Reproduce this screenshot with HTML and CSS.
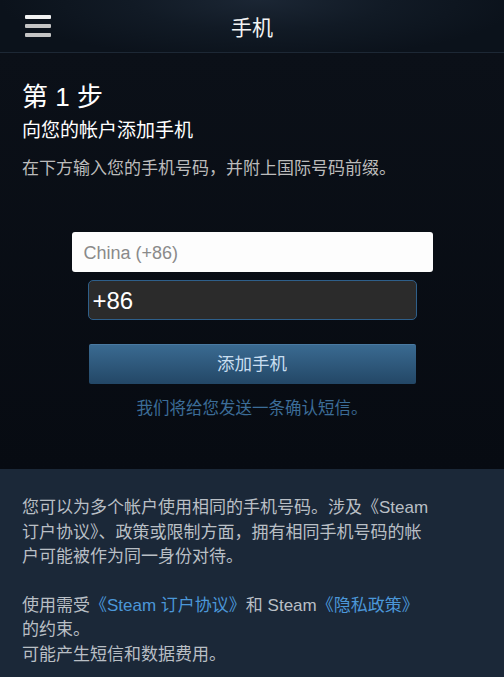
FILE: index.html
```html
<!DOCTYPE html>
<html lang="zh-CN">
<head>
<meta charset="utf-8">
<title>手机</title>
<link rel="stylesheet" href="styles.css">
</head>
<body>
<header class="topbar">
  <div class="menu" aria-label="菜单">
    <span class="bar bar-top"></span>
    <span class="bar"></span>
    <span class="bar"></span>
  </div>
  <h1 class="title">手机</h1>
</header>
<main class="step">
  <h2 class="step-num">第 1 步</h2>
  <h3 class="step-title">向您的帐户添加手机</h3>
  <p class="step-desc">在下方输入您的手机号码，并附上国际号码前缀。</p>
  <div class="form">
    <div class="select">China (+86)</div>
    <div class="phone">+86</div>
    <div class="button">添加手机</div>
    <p class="confirm">我们将给您发送一条确认短信。</p>
  </div>
</main>
<section class="info">
  <p>您可以为多个帐户使用相同的手机号码。涉及《Steam 订户协议》、政策或限制方面，拥有相同手机号码的帐户可能被作为同一身份对待。</p>
  <p>使用需受<a class="link" href="#">《Steam 订户协议》</a>和 Steam<a class="link" href="#">《隐私政策》</a>的约束。<br>可能产生短信和数据费用。</p>
</section>
</body>
</html>
```
FILE: styles.css
```css
* { box-sizing: border-box; }
html, body {
  margin: 0;
  padding: 0;
}
body {
  width: 504px;
  height: 677px;
  overflow: hidden;
  background: #1b2838;
  font-family: "Liberation Sans", "Noto Sans CJK SC", sans-serif;
  color: #fff;
}
.topbar {
  height: 53px;
  position: relative;
  display: flex;
  align-items: center;
  justify-content: center;
  background: radial-gradient(ellipse 260px 60px at 260px 0, #1b2634 0%, #111a25 50%, #0b121b 100%);
  border-bottom: 1px solid #1d2835;
}
.menu {
  position: absolute;
  left: 25px;
  top: 15px;
  width: 26px;
  display: flex;
  flex-direction: column;
  gap: 5px;
}
.bar {
  display: block;
  height: 4px;
  border-radius: 1px;
  background: #c4c4c4;
}
.bar-top { background: #f2f2f2; }
.title {
  margin: 0;
  font-size: 21px;
  font-weight: normal;
  color: #f4f4f4;
}
.step {
  background: linear-gradient(#0b1018, #070b12);
  padding: 26px 22px 34px;
  height: 416px;
}
.step-num {
  margin: 0;
  font-size: 26px;
  font-weight: normal;
  line-height: 36px;
}
.step-title {
  margin: 0;
  font-size: 19px;
  font-weight: normal;
  line-height: 32px;
}
.step-desc {
  margin: 10px 0 0;
  font-size: 17px;
  line-height: 24px;
  color: #bcbcbc;
}
.form {
  margin-top: 50px;
  display: flex;
  flex-direction: column;
  align-items: center;
}
.select {
  width: 361px;
  height: 40px;
  margin-top: 1px;
  background: #fdfdfd;
  border-radius: 3px;
  color: #8a8a8a;
  font-size: 18px;
  line-height: 42px;
  padding-left: 12px;
}
.phone {
  margin-top: 8px;
  width: 329px;
  height: 40px;
  background: #2b2b2b;
  border: 1px solid #2e5f8a;
  border-radius: 5px;
  color: #fff;
  font-size: 24px;
  line-height: 40px;
  padding-left: 4px;
}
.button {
  margin-top: 24px;
  width: 327px;
  height: 40px;
  border-radius: 2px;
  background: linear-gradient(#3a6a91, #234766);
  border-top: 1px solid #4a7aa2;
  color: #c9def0;
  font-size: 17.5px;
  line-height: 38px;
  text-align: center;
}
.confirm {
  margin: 12px 0 0;
  font-size: 16.5px;
  line-height: 24px;
  color: #3c6d98;
}
.info {
  height: 208px;
  padding: 27px 72px 0 22px;
  background: #1b2838;
}
.info p {
  margin: 0 0 24px;
  font-size: 17px;
  line-height: 24.5px;
  color: #b9bfc5;
}
.info p:last-child { margin-bottom: 0; }
.link {
  color: #4b97d8;
  text-decoration: none;
}
```
